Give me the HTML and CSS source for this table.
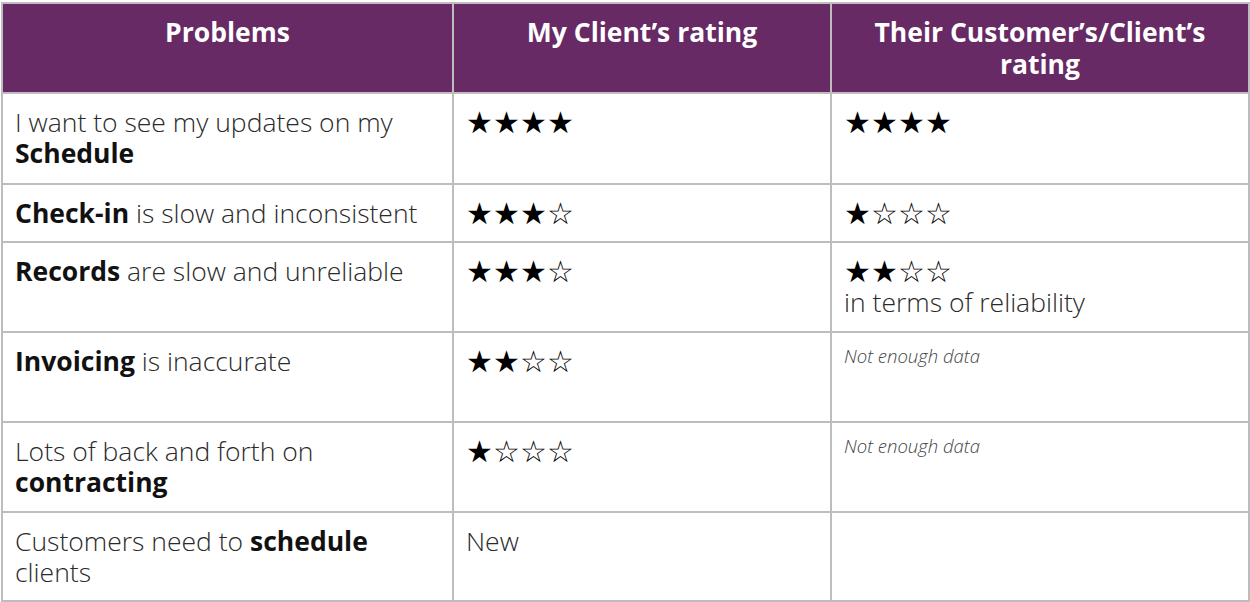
FILE: index.html
```html
<!DOCTYPE html>
<html lang="en">
<head>
<meta charset="utf-8">
<title>Problems ratings</title>
<link rel="stylesheet" href="styles.css">
</head>
<body>
<div class="page">
<table class="ratings">
  <colgroup>
    <col class="c1"><col class="c2"><col class="c3">
  </colgroup>
  <thead>
    <tr>
      <th>Problems</th>
      <th>My Client’s rating</th>
      <th>Their Customer’s/Client’s rating</th>
    </tr>
  </thead>
  <tbody>
    <tr class="r1">
      <td>I want to see my updates on my <b>Schedule</b></td>
      <td><span class="stars">★★★★</span></td>
      <td><span class="stars">★★★★</span></td>
    </tr>
    <tr class="r2">
      <td><b>Check-in</b> is slow and inconsistent</td>
      <td><span class="stars">★★★☆</span></td>
      <td><span class="stars">★☆☆☆</span></td>
    </tr>
    <tr class="r3">
      <td><b>Records</b> are slow and unreliable</td>
      <td><span class="stars">★★★☆</span></td>
      <td><span class="stars">★★☆☆</span>in terms of reliability</td>
    </tr>
    <tr class="r4">
      <td><b>Invoicing</b> is inaccurate</td>
      <td><span class="stars">★★☆☆</span></td>
      <td><span class="note">Not enough data</span></td>
    </tr>
    <tr class="r5">
      <td>Lots of back and forth on <b>contracting</b></td>
      <td><span class="stars">★☆☆☆</span></td>
      <td><span class="note">Not enough data</span></td>
    </tr>
    <tr class="r6">
      <td>Customers need to <b>schedule</b> clients</td>
      <td>New</td>
      <td></td>
    </tr>
  </tbody>
</table>
</div>
</body>
</html>
```

FILE: styles.css
```css
html, body {
  margin: 0;
  padding: 0;
  background: #ffffff;
}
.page {
  padding: 2px 0 0 1px;
}
.ratings {
  border-collapse: collapse;
  table-layout: fixed;
  width: 1247px;
  font-family: "Open Sans", "Liberation Sans", sans-serif;
  font-size: 26.5px;
  line-height: 31px;
  color: #2a2a2a;
}
.c1 { width: 451px; }
.c2 { width: 378px; }
.c3 { width: 418px; }
.ratings th,
.ratings td {
  border: 2px solid #bdbdbd;
  vertical-align: top;
  text-align: left;
}
.ratings th {
  background: #672a65;
  color: #ffffff;
  font-weight: 700;
  text-align: center;
  height: 90px;
  line-height: 32px;
  padding: 12px 30px 0;
  box-sizing: border-box;
}
.ratings td {
  font-weight: 300;
  padding: 13px 12px 0;
  box-sizing: border-box;
}
.ratings td b {
  font-weight: 700;
  color: #111;
}
.r1 td { height: 91px; }
.r2 td { height: 58px; }
.r3 td { height: 90px; }
.r4 td { height: 90px; }
.r5 td { height: 90px; }
.r6 td { height: 89px; }
.stars {
  display: block;
  font-family: "DejaVu Sans", sans-serif;
  font-size: 29.8px;
  line-height: 31px;
  color: #000;
  margin-top: 0;
}
.note {
  display: block;
  font-style: italic;
  font-size: 18.5px;
  line-height: 24px;
  color: #444;
  margin-top: -2px;
}
```
